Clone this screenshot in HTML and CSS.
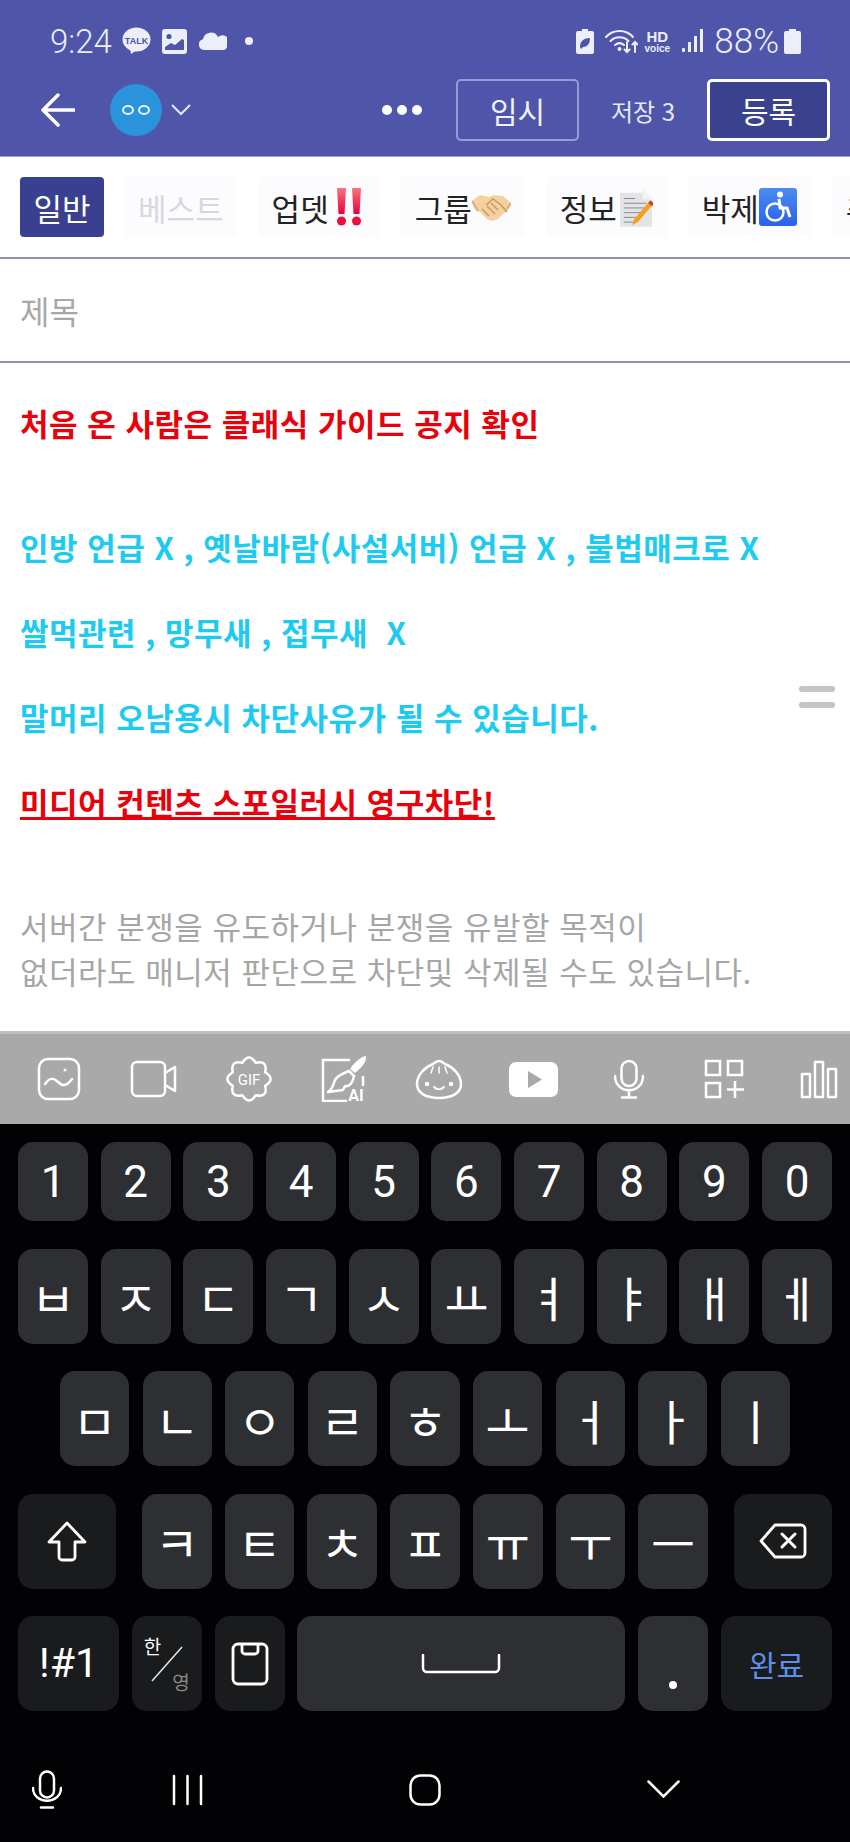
FILE: index.html
```html
<!DOCTYPE html>
<html lang="ko">
<head>
	<meta charset="UTF-8">
	<title>글쓰기</title>
	<link rel="stylesheet" href="styles.css">
</head>
<body>
	<div id="phone">
		<header id="top">
			<div class="status">
				<span class="time">9:24</span>
				<svg class="s-talk" width="29" height="28" viewBox="0 0 29 28"><ellipse cx="14.5" cy="12.5" rx="14" ry="12" fill="#eceefa"/><path d="M8 21l1 6 6-4z" fill="#eceefa"/><text x="14.5" y="16.5" text-anchor="middle" class="talk-txt">TALK</text></svg>
				<svg class="s-img" width="25" height="25" viewBox="0 0 25 25"><rect width="25" height="25" rx="3" fill="#eceefa"/><circle cx="7" cy="7.5" r="2.6" fill="#4f56a9"/><path d="M3 21v-3l6-4 4 2 7-6 2 1v10z" fill="#4f56a9"/></svg>
				<svg class="s-cloud" width="29" height="18" viewBox="0 0 29 18"><path d="M6 18a5.500 5.500 0 0 1-1-10.800A8 8 0 0 1 20 5a6.500 6.500 0 0 1 9 10c-.6 2-2 3-4 3z" fill="#eceefa"/></svg>
				<span class="s-dot"></span>
				<span class="grow"></span>
				<svg class="s-leaf" width="18" height="25" viewBox="0 0 18 25"><path d="M6 0h6v2h4a2 2 0 0 1 2 2v19a2 2 0 0 1-2 2H2a2 2 0 0 1-2-2V4a2 2 0 0 1 2-2h4z" fill="#eceefa"/><path d="M4 18c0-6 4-9 10-9 0 6-3 9-7 9l-2 2z" fill="#4f56a9"/></svg>
				<svg class="s-wifi" width="33" height="26" viewBox="0 0 33 26" fill="none" stroke="#eceefa" stroke-width="2" stroke-linecap="round"><path d="M1 9c7-8 20-8 27 0"/><path d="M5.500 13c5-5 13-5 18 0"/><path d="M10 17c3-2.500 6-2.500 9 0"/><circle cx="14.500" cy="21" r="1" fill="#eceefa"/><path d="M22 14v10m-2.500-2.500l2.500 2.500 2.500-2.500M30 24v-10m-2.500 2.500l2.500-2.500 2.500 2.500"/></svg>
				<span class="s-hd"><b>HD</b><i>voice</i></span>
				<svg class="s-signal" width="22" height="24" viewBox="0 0 22 24" fill="#eceefa"><rect x="0" y="19" width="3" height="4" rx="1"/><rect x="6" y="13" width="3" height="10"/><rect x="12" y="7" width="3" height="16"/><rect x="18" y="0" width="3" height="23"/></svg>
				<span class="batt">88%</span>
				<svg class="s-batt" width="17" height="25" viewBox="0 0 17 25"><path d="M5 0h7v2h3a2 2 0 0 1 2 2v19a2 2 0 0 1-2 2H2a2 2 0 0 1-2-2V4a2 2 0 0 1 2-2h3z" fill="#eceefa"/></svg>
			</div>
			<div class="actions">
				<svg class="back" width="34" height="34" viewBox="0 0 34 34" fill="none" stroke="#fff" stroke-width="3.500" stroke-linecap="round" stroke-linejoin="round"><path d="M33 17H2M17 2L2 17l15 15"/></svg>
				<span class="avatar"><i></i><i></i></span>
				<svg class="chev" width="20" height="12" viewBox="0 0 20 12" fill="none" stroke="#e6e8f6" stroke-width="2"><path d="M1 1l9 9 9-9"/></svg>
				<span class="more"><i></i><i></i><i></i></span>
				<span class="btn-temp">임시</span>
				<span class="save-count">저장 3</span>
				<span class="btn-post">등록</span>
			</div>
		</header>

		<nav id="tabs">
			<span class="tab on">일반</span>
			<span class="tab off">베스트</span>
			<span class="tab">업뎃<svg class="bang" width="26" height="38" viewBox="0 0 26 38"><defs><linearGradient id="red" x1="0" y1="0" x2="0" y2="1"><stop offset="0" stop-color="#f8757f"/><stop offset="1" stop-color="#e8003c"/></linearGradient></defs><path d="M1 0h9l-1.500 26h-6zM16 0h9l-1.500 26h-6z" fill="url(#red)"/><circle cx="5.500" cy="33" r="4.500" fill="#e8103f"/><circle cx="20.500" cy="33" r="4.500" fill="#e8103f"/></svg></span>
			<span class="tab">그룹<svg width="39" height="28" viewBox="0 0 39 28"><path d="M0 8l8-6 9 2 5-2 9 1 8 7-5 8-8 8-6 2-5-2-7-7-6-4z" fill="#f4d1a0"/><path d="M14 12l7-6 8 6 6 7M10 16l7 7M15 13l8 8M19 10l7 7" fill="none" stroke="#c79a5c" stroke-width="1.500"/><path d="M0 8l6 10M39 10l-6 9" stroke="#d9ae74" stroke-width="2"/></svg></span>
			<span class="tab">정보<svg class="memo" width="34" height="40" viewBox="0 0 36 42"><path d="M1 6h24l10 8v28H1z" fill="#e3e4e6"/><path d="M25 0l10 13H25z" fill="#f2f2f3"/><path d="M5 12h12M5 17h24M5 22h24M5 27h22M5 32h14M5 37h10" stroke="#85868a" stroke-width="1"/><path d="M33 14l4 3-17 20-6 3 2-6z" fill="#f5a01c"/><path d="M33 14l4 3-2 3-4-3z" fill="#c8402c"/></svg></span>
			<span class="tab">박제<svg width="38" height="38" viewBox="0 0 38 38"><defs><linearGradient id="blue" x1="0" y1="0" x2="0" y2="1"><stop offset="0" stop-color="#4a8df0"/><stop offset="1" stop-color="#2a62ea"/></linearGradient></defs><rect width="38" height="38" rx="3" fill="url(#blue)"/><circle cx="21" cy="6.500" r="3" fill="#fff"/><path d="M20 11l1 9h7l3 9" fill="none" stroke="#fff" stroke-width="3" stroke-linejoin="round"/><circle cx="16" cy="24" r="8.500" fill="none" stroke="#fff" stroke-width="2.500"/></svg></span>
			<span class="tab">추천</span>
		</nav>

		<div id="subject">제목</div>

		<main id="editor">
			<p class="red">처음 온 사람은 클래식 가이드 공지 확인</p>
			<p class="cyan far">인방 언급 X , 옛날바람(사설서버) 언급 X , 불법매크로 X</p>
			<p class="cyan">쌀먹관련 , 망무새 , 접무새 &nbsp;X</p>
			<p class="cyan">말머리 오남용시 차단사유가 될 수 있습니다.</p>
			<p class="red under">미디어 컨텐츠 스포일러시 영구차단!</p>
			<p class="gray far">서버간 분쟁을 유도하거나 분쟁을 유발할 목적이<br>없더라도 매니저 판단으로 차단및 삭제될 수도 있습니다.</p>
			<div class="handle"><i></i><i></i></div>
		</main>

		<div id="tools">
			<span class="tool"><svg width="44" height="44" viewBox="0 0 44 44" fill="none" stroke="#fff" stroke-width="2.500" stroke-linecap="round"><rect x="2" y="2" width="40" height="40" rx="9"/><path d="M8 27c5-7 9-6 13-2s8 5 14-3"/><circle cx="28" cy="13" r="1.500" fill="#fff" stroke="none"/></svg></span>
			<span class="tool"><svg width="47" height="38" viewBox="0 0 47 38" fill="none" stroke="#fff" stroke-width="2.500" stroke-linejoin="round"><path d="M7 2h23a5 5 0 0 1 5 5v24a5 5 0 0 1-5 5H7a5 5 0 0 1-5-5V7a5 5 0 0 1 5-5z"/><path d="M35 13l10-6v24l-10-6"/></svg></span>
			<span class="tool"><svg width="48" height="48" viewBox="0 0 48 48"><path d="M40.200 17.300Q51 24 40.200 30.700Q43 43 30.700 40.200Q24 51 17.300 40.200Q5 43 7.800 30.700Q-3 24 7.800 17.300Q5 5 17.300 7.800Q24-3 30.700 7.800Q43 5 40.200 17.300z" fill="none" stroke="#fff" stroke-width="2.500" stroke-linejoin="round"/><text x="24" y="29.500" text-anchor="middle" class="gif-txt">GIF</text></svg></span>
			<span class="tool"><svg width="46" height="46" viewBox="0 0 46 46"><path d="M29 4H2v41h24M42 20v10" fill="none" stroke="#fff" stroke-width="2.500"/><path d="M45 0c1 6-5 12-11 17l-5-4c4-6 10-12 16-13z" fill="#fff"/><path d="M28 15l5 5c-1 7-5 11-9 10l-2 4-15 2c5-3 5-7 7-12 3-5 9-7 14-9z" fill="none" stroke="#fff" stroke-width="2.500" stroke-linejoin="round"/><text x="35" y="45" text-anchor="middle" class="ai-txt">AI</text></svg></span>
			<span class="tool"><svg width="48" height="42" viewBox="0 0 48 42" fill="none" stroke="#fff" stroke-width="2.500" stroke-linecap="round"><path d="M24 3c3 0 4 2 6 3 8 3 16 11 16 20 0 9-9 14-22 14S2 35 2 26C2 17 10 9 18 6c2-1 3-3 6-3z"/><path d="M18 9l-2 6M24 9v6M30 9l2 6" stroke-width="1.500"/><path d="M19 29c3 3 7 3 10 0" stroke-width="2"/><circle cx="12" cy="26" r="1" fill="#fff"/><circle cx="36" cy="26" r="1" fill="#fff"/></svg></span>
			<span class="tool"><svg width="49" height="35" viewBox="0 0 49 35"><rect width="49" height="35" rx="7" fill="#fff"/><path d="M19 9l14 8.500L19 26z" fill="#a9a9a9"/></svg></span>
			<span class="tool"><svg width="30" height="40" viewBox="0 0 30 40" fill="none" stroke="#fff" stroke-width="2.500" stroke-linecap="round"><rect x="7.500" y="2" width="15" height="25" rx="7.500"/><path d="M1 17c0 19 28 19 28 0M15 31v7M8 38.500h14"/></svg></span>
			<span class="tool"><svg width="40" height="40" viewBox="0 0 40 40" fill="none" stroke="#fff" stroke-width="2.500"><rect x="2" y="2" width="14" height="14"/><rect x="24" y="2" width="14" height="14"/><rect x="2" y="24" width="14" height="14"/><path d="M31 22v17M23 30.500h17"/></svg></span>
			<span class="tool"><svg width="38" height="39" viewBox="0 0 38 39" fill="none" stroke="#fff" stroke-width="2.500" stroke-linejoin="round"><rect x="2" y="14" width="8" height="23"/><rect x="15" y="2" width="8" height="35"/><rect x="28" y="9" width="8" height="28"/></svg></span>
		</div>

		<section id="keyboard">
			<div class="row num">
				<span class="key">1</span><span class="key">2</span><span class="key">3</span><span class="key">4</span><span class="key">5</span><span class="key">6</span><span class="key">7</span><span class="key">8</span><span class="key">9</span><span class="key">0</span>
			</div>
			<div class="row ten">
				<span class="key">ㅂ</span><span class="key">ㅈ</span><span class="key">ㄷ</span><span class="key">ㄱ</span><span class="key">ㅅ</span><span class="key">ㅛ</span><span class="key">ㅕ</span><span class="key">ㅑ</span><span class="key">ㅐ</span><span class="key">ㅔ</span>
			</div>
			<div class="row nine">
				<span class="key">ㅁ</span><span class="key">ㄴ</span><span class="key">ㅇ</span><span class="key">ㄹ</span><span class="key">ㅎ</span><span class="key">ㅗ</span><span class="key">ㅓ</span><span class="key">ㅏ</span><span class="key">ㅣ</span>
			</div>
			<div class="row shift-row">
				<span class="key fn wide"><svg width="40" height="41" viewBox="0 0 40 41" fill="none" stroke="#fff" stroke-width="2.800" stroke-linejoin="round"><path d="M20 2L2 21h10v15a3 3 0 0 0 3 3h10a3 3 0 0 0 3-3V21h10z"/></svg></span>
				<span class="key">ㅋ</span><span class="key">ㅌ</span><span class="key">ㅊ</span><span class="key">ㅍ</span><span class="key">ㅠ</span><span class="key">ㅜ</span><span class="key">ㅡ</span>
				<span class="key fn wide"><svg width="48" height="36" viewBox="0 0 48 36" fill="none" stroke="#fff" stroke-width="2.800" stroke-linejoin="round" stroke-linecap="round"><path d="M16 2h26a4 4 0 0 1 4 4v24a4 4 0 0 1-4 4H16L2 18z"/><path d="M23 11l13 13M36 11L23 24" stroke-width="3"/></svg></span>
			</div>
			<div class="row last-row">
				<span class="key fn sym">!#1</span>
				<span class="key fn lang"><span class="han">한</span><svg width="32" height="36" viewBox="0 0 32 36"><path d="M1 35L31 1" stroke="#e8e8e8" stroke-width="1.500"/></svg><span class="eng">영</span></span>
				<span class="key fn"><svg width="38" height="44" viewBox="0 0 38 44" fill="none" stroke="#fff" stroke-width="2.800" stroke-linejoin="round"><rect x="2" y="2" width="34" height="40" rx="5"/><path d="M11 2v7a3 3 0 0 0 3 3h10a3 3 0 0 0 3-3V2"/></svg></span>
				<span class="key space"><svg width="80" height="20" viewBox="0 0 80 20" fill="none" stroke="#fff" stroke-width="2.500" stroke-linecap="round"><path d="M2 1v13a4 4 0 0 0 4 4h68a4 4 0 0 0 4-4V1"/></svg></span>
				<span class="key dot"><i></i></span>
				<span class="key fn done">완료</span>
			</div>
		</section>

		<footer id="navbar">
			<svg class="n-mic" width="30" height="39" viewBox="0 0 30 39" fill="none" stroke="#fff" stroke-width="2.500" stroke-linecap="round"><rect x="8" y="1.500" width="14" height="26" rx="7"/><path d="M1 18c0 17 28 17 28 0M9 37.500h12"/></svg>
			<svg class="n-menu" width="31" height="32" viewBox="0 0 31 32" fill="none" stroke="#fff" stroke-width="2.500" stroke-linecap="round"><path d="M2 2v28M15.500 2v28M29 2v28"/></svg>
			<svg class="n-home" width="32" height="32" viewBox="0 0 32 32" fill="none" stroke="#fff" stroke-width="2.500"><rect x="1.500" y="1.500" width="29" height="29" rx="10"/></svg>
			<svg class="n-down" width="33" height="19" viewBox="0 0 33 19" fill="none" stroke="#fff" stroke-width="2.500" stroke-linecap="round"><path d="M1.500 1.500l15 15 15-15"/></svg>
		</footer>
	</div>
</body>
</html>
```

FILE: styles.css
```css
*{
	margin: 0;
	padding: 0;
	box-sizing: border-box;
}
body{
	background: #fff;
	font-family: "Noto Sans CJK KR", "Noto Sans", sans-serif;
}
i{
	display: block;
}
#phone{
	width: 850px;
	height: 1842px;
	overflow: hidden;
	display: flex;
	flex-direction: column;
}

/* top bar */
#top{
	height: 157px;
	background: #4f56a9;
	border-bottom: 1px solid #a3a4c4;
	color: #eceefa;
}
.status{
	height: 70px;
	padding: 12px 49px 0 50px;
	display: flex;
	align-items: center;
}
.grow{
	flex: 1;
}
.time{
	font-family: Roboto, sans-serif;
	font-size: 33px;
	font-weight: 300;
	margin-right: 10px;
}
.s-talk{
	margin-right: 11px;
}
.s-img{
	margin-right: 11px;
}
.s-cloud{
	margin-right: 18px;
}
.talk-txt{
	font-family: "Liberation Sans", sans-serif;
	font-size: 9px;
	font-weight: 700;
	fill: #4f56a9;
}
.s-dot{
	width: 8px;
	height: 8px;
	border-radius: 50%;
	background: #eceefa;
}
.s-wifi{
	margin: 0 6px 0 11px;
}
.s-hd{
	width: 26px;
	font-family: "Liberation Sans", sans-serif;
	display: flex;
	flex-direction: column;
	align-items: center;
	line-height: 1;
	margin-right: 12px;
}
.s-hd b{
	font-size: 15px;
}
.s-hd i{
	font-size: 10px;
	font-style: normal;
	font-weight: 700;
}
.batt{
	font-family: Roboto, sans-serif;
	font-size: 35px;
	font-weight: 300;
	margin: 0 5px 0 10px;
}
.actions{
	height: 80px;
	padding-left: 41px;
	display: flex;
	align-items: center;
}
.avatar{
	width: 52px;
	height: 52px;
	border-radius: 50%;
	background: #2a93db;
	margin: 0 9px 0 35px;
	display: flex;
	justify-content: center;
	align-items: center;
	gap: 4px;
}
.avatar i{
	width: 12px;
	height: 10px;
	border: 2px solid #e6f2fb;
	border-radius: 50%;
}
.more{
	display: flex;
	gap: 5px;
	margin: 0 34px 0 191px;
}
.more i{
	width: 10px;
	height: 10px;
	border-radius: 50%;
	background: #fff;
}
.btn-temp,.btn-post{
	width: 123px;
	height: 62px;
	display: flex;
	justify-content: center;
	align-items: center;
	font-size: 30px;
	border-radius: 5px;
}
.btn-temp{
	border: 2px solid #959cd8;
	color: #f0f1fa;
}
.save-count{
	width: 128px;
	text-align: center;
	font-size: 24px;
	color: #e6e8f6;
}
.btn-post{
	background: #3a418f;
	border: 3px solid #fff;
	color: #fff;
}

/* category tabs */
#tabs{
	height: 102px;
	padding: 20px 0 0 20px;
	border-bottom: 2px solid #9092ac;
	display: flex;
	align-items: flex-start;
	gap: 21px;
	overflow: hidden;
}
.tab{
	height: 60px;
	padding: 0 14px;
	flex-shrink: 0;
	background: #fcfbfd;
	color: #222;
	font-size: 31px;
	display: flex;
	align-items: center;
	border-radius: 4px;
}
.tab.on{
	padding: 0 13.5px;
	background: #38408f;
	color: #fff;
}
.tab.off{
	padding: 0 13px;
	color: #d8d8dc;
}
.bang{
	margin: 0 4px 0 7px;
}
.memo{
	margin-left: 2px;
}

/* subject */
#subject{
	height: 104px;
	padding-left: 20px;
	border-bottom: 2px solid #9092ac;
	display: flex;
	align-items: center;
	color: #a8a8a8;
	font-size: 32px;
}

/* editor */
#editor{
	position: relative;
	height: 668px;
	padding: 37px 0 0 20px;
	font-size: 31px;
	letter-spacing: .5px;
	white-space: nowrap;
}
#editor p{
	line-height: 45px;
	margin-bottom: 40px;
}
#editor p.far{
	margin-top: 79px;
}
.red{
	color: #e8000b;
	font-weight: 700;
}
.cyan{
	color: #1ecbf0;
	font-weight: 700;
}
.under{
	text-decoration: underline;
}
.gray{
	color: #a6a6a6;
}
.handle{
	position: absolute;
	left: 799px;
	top: 323px;
}
.handle i{
	width: 36px;
	height: 6px;
	border-radius: 3px;
	background: #c4c4c8;
	margin-bottom: 10px;
}

/* toolbar */
#tools{
	height: 93px;
	background: #a9a9a9;
	border-top: 3px solid #bdbdbd;
	padding-left: 11px;
	display: flex;
	overflow: hidden;
}
.tool{
	width: 95px;
	flex-shrink: 0;
	display: flex;
	justify-content: center;
	align-items: center;
}
.gif-txt{
	font-family: Roboto, sans-serif;
	font-size: 15px;
	fill: #fff;
}
.ai-txt{
	font-family: Roboto, sans-serif;
	font-size: 16px;
	font-weight: 700;
	fill: #fff;
}

/* keyboard */
#keyboard{
	height: 605px;
	background: #020204;
	padding-top: 18px;
	display: flex;
	flex-direction: column;
	gap: 27.5px;
}
.row{
	height: 95px;
	padding: 0 18px;
	display: flex;
	gap: 12.67px;
}
.row.num{
	height: 79px;
}
.row.nine{
	padding: 0 60px;
	gap: 13.5px;
}
.key{
	flex: 1 1 0;
	background: #2e2f32;
	border-radius: 15px;
	color: #fff;
	font-size: 48px;
	display: flex;
	justify-content: center;
	align-items: center;
	line-height: 1;
}
.num .key{
	font-family: Roboto, sans-serif;
	font-size: 44px;
	font-weight: 400;
}
.key.fn{
	background: #1a1b1d;
}
.shift-row{
	gap: 13px;
}
.shift-row .wide{
	flex: 0 0 98px;
}
.shift-row .wide:first-child{
	margin-right: 13px;
}
.shift-row .wide:last-child{
	margin-left: 13px;
}
.last-row .key{
	flex: 0 0 70px;
}
.row.last-row{
	gap: 12.8px;
}
.last-row .sym{
	flex-basis: 101px;
	font-family: Roboto, sans-serif;
	font-size: 41px;
}
.last-row .lang{
	position: relative;
}
.han,.eng{
	position: absolute;
	font-size: 19px;
}
.han{
	left: 12px;
	top: 20px;
}
.eng{
	right: 12px;
	bottom: 20px;
	color: #8a8a8c;
}
.last-row .space{
	flex-basis: 328px;
}
.last-row .dot{
	align-items: flex-end;
	padding-bottom: 22px;
}
.dot i{
	width: 8px;
	height: 8px;
	border-radius: 50%;
	background: #fff;
}
.last-row .done{
	flex-basis: 111px;
	font-size: 30px;
	color: #5f8fe8;
}

/* bottom nav */
#navbar{
	flex: 1;
	background: #020204;
	padding: 8px 0 0 32px;
	display: flex;
	align-items: center;
	gap: 206px;
}
.n-menu{
	margin-left: -96px;
}
```
